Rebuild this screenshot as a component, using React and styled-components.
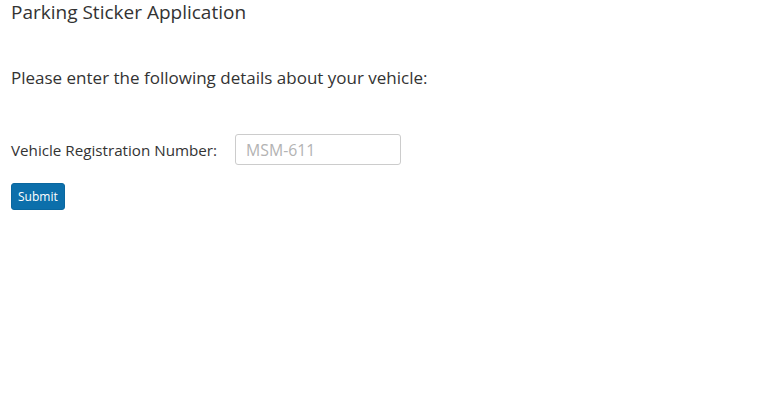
import React from "react";
import styled, { createGlobalStyle } from "styled-components";

const Global = createGlobalStyle`
  html, body { margin: 0; padding: 0; background: #fff; }
  body { font-family: "Open Sans", "Noto Sans", sans-serif; color: #333; }
`;

const Page = styled.div`
  padding: 0 11px;
`;

const Title = styled.h1`
  margin: 0;
  font-size: 19px;
  font-weight: 400;
  line-height: 24px;
  color: #333;
`;

const Intro = styled.h2`
  margin: 42px 0 0;
  font-size: 17px;
  font-weight: 400;
  line-height: 24px;
  color: #333;
`;

const Form = styled.form`
  margin-top: 44px;
  display: flex;
  flex-direction: column;
  align-items: flex-start;
  gap: 18px;
`;

const Row = styled.div`
  display: flex;
  align-items: center;
  gap: 18px;
`;

const Label = styled.label`
  font-size: 15.2px;
  color: #333;
`;

const Input = styled.input`
  box-sizing: border-box;
  width: 166px;
  height: 31px;
  padding: 4px 10px;
  border: 1px solid #ccc;
  border-radius: 3px;
  font-family: inherit;
  font-size: 15.8px;
  color: #555;
  &::placeholder { color: #b3b3b3; }
`;

const Button = styled.button`
  box-sizing: border-box;
  height: 27px;
  padding: 0 6px;
  background: #0c6fab;
  color: #fff;
  border: 1px solid #0a679f;
  border-radius: 3px;
  font-family: inherit;
  font-size: 12px;
`;

export default function App() {
  return (
    <Page>
      <Global />
      <Title>Parking Sticker Application</Title>
      <Intro>Please enter the following details about your vehicle:</Intro>
      <Form onSubmit={(e) => e.preventDefault()}>
        <Row>
          <Label htmlFor="reg">Vehicle Registration Number:</Label>
          <Input id="reg" placeholder="MSM-611" />
        </Row>
        <Button type="submit">Submit</Button>
      </Form>
    </Page>
  );
}
